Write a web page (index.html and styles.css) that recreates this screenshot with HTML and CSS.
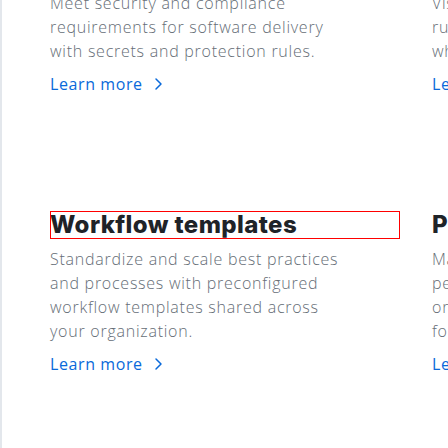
FILE: index.html
```html
<!DOCTYPE html>
<html lang="en">
<head>
<meta charset="utf-8">
<title>Actions features</title>
<link rel="stylesheet" href="styles.css">
</head>
<body>
<main class="page">
<div class="features">
  <div class="card">
    <h3 class="card-title">Secrets and protection</h3>
    <p class="card-text">Meet security and compliance requirements for software delivery with secrets and protection rules.</p>
    <a class="learn" href="#">Learn more <svg class="chev" viewBox="0 0 16 16" width="16" height="16"><path d="M6 3 11 8 6 13" fill="none" stroke="currentColor" stroke-width="1.5" stroke-linecap="round" stroke-linejoin="round"/></svg></a>
  </div>
  <div class="card">
    <h3 class="card-title">Visual workflows</h3>
    <p class="card-text">Visualize every build and test<br>run in real time and see exactly<br>where builds pass or fail.</p>
    <a class="learn" href="#">Learn more <svg class="chev" viewBox="0 0 16 16" width="16" height="16"><path d="M6 3 11 8 6 13" fill="none" stroke="currentColor" stroke-width="1.5" stroke-linecap="round" stroke-linejoin="round"/></svg></a>
  </div>
  <div class="card">
    <h3 class="card-title outlined">Workflow templates</h3>
    <p class="card-text">Standardize and scale best practices and processes with preconfigured workflow templates shared across your organization.</p>
    <a class="learn" href="#">Learn more <svg class="chev" viewBox="0 0 16 16" width="16" height="16"><path d="M6 3 11 8 6 13" fill="none" stroke="currentColor" stroke-width="1.5" stroke-linecap="round" stroke-linejoin="round"/></svg></a>
  </div>
  <div class="card">
    <h3 class="card-title">Private actions</h3>
    <p class="card-text">Manage and share actions and<br>permissions across your<br>organization's private repos<br>for secure reuse.</p>
    <a class="learn" href="#">Learn more <svg class="chev" viewBox="0 0 16 16" width="16" height="16"><path d="M6 3 11 8 6 13" fill="none" stroke="currentColor" stroke-width="1.5" stroke-linecap="round" stroke-linejoin="round"/></svg></a>
  </div>
</div>
</main>
</body>
</html>
```
FILE: styles.css
```css
html {
  overflow: hidden;
  background: #ffffff;
}
body {
  margin: 0;
  font-family: "Open Sans", sans-serif;
}
.page {
  width: 448px;
  height: 448px;
  overflow: hidden;
}
.features {
  display: grid;
  grid-template-columns: 350px 350px;
  column-gap: 32px;
  row-gap: 115px;
  margin-top: -45px;
  padding-left: 48px;
  padding-bottom: 80px;
  border-left: 2px solid #e3e7ec;
}
.card {
  display: flex;
  flex-direction: column;
  align-items: flex-start;
}
.card-title {
  margin: 0 0 8px;
  font-family: Inter, sans-serif;
  font-size: 24px;
  line-height: 28px;
  font-weight: 800;
  color: #1f2328;
  letter-spacing: 0.4px;
  align-self: stretch;
}
.outlined {
  outline: 1px solid #ff0000;
  outline-offset: -1px;
}
.card-text {
  margin: 0 0 8px;
  font-size: 16px;
  font-weight: 350;
  line-height: 24px;
  letter-spacing: 0.75px;
  color: #656d76;
  max-width: 300px;
}
.learn {
  display: inline-flex;
  align-items: center;
  gap: 7px;
  height: 24px;
  font-size: 16px;
  line-height: 24px;
  font-weight: 500;
  letter-spacing: 0.6px;
  color: #0969da;
  text-decoration: none;
  margin-top: 1px;
}
.chev {
  display: block;
}
```
